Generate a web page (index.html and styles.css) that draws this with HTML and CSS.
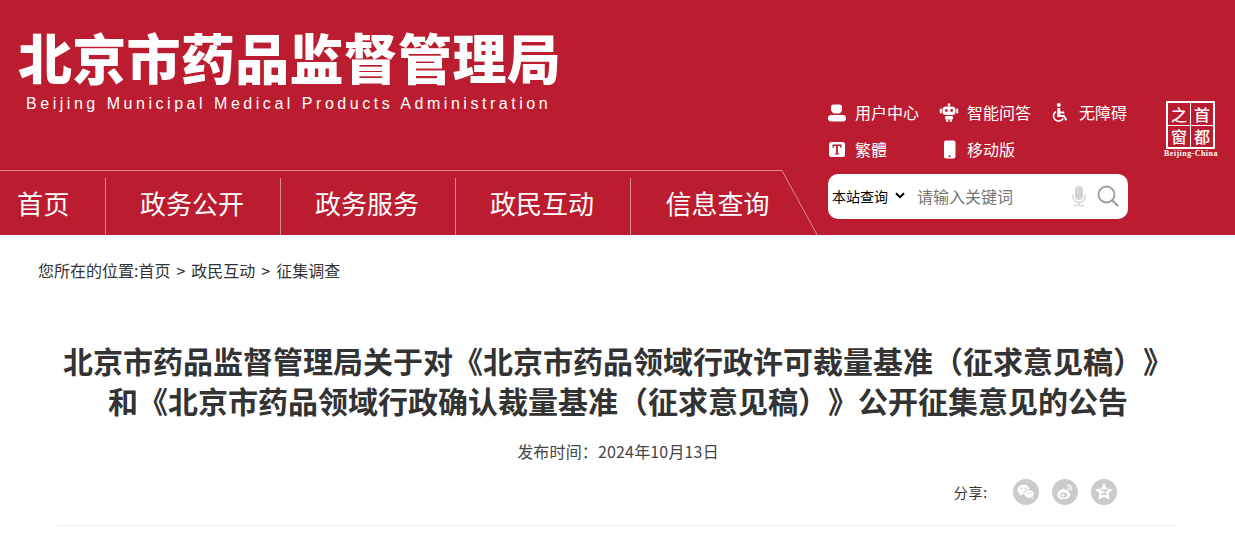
FILE: index.html
```html
<!DOCTYPE html>
<html lang="zh-CN">
<head>
<meta charset="utf-8">
<title>北京市药品监督管理局</title>
<link rel="stylesheet" href="styles.css">
</head>
<body>
<header class="header">
  <div class="brand-col">
    <div class="brand">
      <div class="brand-cn">北京市药品监督管理局</div>
      <div class="brand-en">Beijing Municipal Medical Products Administration</div>
    </div>
    <nav class="nav">
      <a class="nav-item nav-first">首页</a>
      <a class="nav-item">政务公开</a>
      <a class="nav-item">政务服务</a>
      <a class="nav-item">政民互动</a>
      <a class="nav-item nav-last">信息查询</a>
    </nav>
    <svg class="nav-slant" width="40" height="66" viewBox="0 0 40 66"><path d="M0 .5H3L38.500 65.500" fill="none" stroke="#d98b95" stroke-width="1"/></svg>
  </div>
  <div class="tools-col">
    <div class="tools">
      <a class="tool">
        <svg class="ico" width="20" height="20" viewBox="0 0 20 20"><path d="M6.500 2.500h6c1.500 0 2.500 1 2.500 2.500v2.500c0 2.200-1.500 4-3.500 4H8c-2 0-4-1.800-4-4V5c0-1.500 1-2.500 2.500-2.500z" fill="#fff"/><rect x="1" y="13" width="18" height="6.500" rx="3.200" fill="#fff"/></svg>
        <span>用户中心</span>
      </a>
      <a class="tool">
        <svg class="ico" width="20" height="20" viewBox="0 0 20 20"><circle cx="10" cy="2.500" r="1.200" fill="#fff"/><rect x="9.400" y="2.500" width="1.200" height="2" fill="#fff"/><rect x="3.500" y="4.500" width="13" height="8.500" rx="3.500" fill="#fff"/><rect x=".8" y="6.500" width="2" height="5" rx="1" fill="#fff"/><rect x="17.200" y="6.500" width="2" height="5" rx="1" fill="#fff"/><circle cx="7.300" cy="8.500" r="1.400" fill="#bc1c2f"/><circle cx="12.700" cy="8.500" r="1.400" fill="#bc1c2f"/><rect x="6" y="14" width="8" height="3.500" rx="1" fill="#fff"/><rect x="7" y="17.500" width="2.300" height="2.200" fill="#fff"/><rect x="10.700" y="17.500" width="2.300" height="2.200" fill="#fff"/></svg>
        <span>智能问答</span>
      </a>
      <a class="tool">
        <svg class="ico" width="20" height="20" viewBox="0 0 20 20"><circle cx="7.800" cy="3" r="2" fill="#fff"/><path d="M6.300 6h3v3.500h4v2h-4v1.500h4.200l2.700 4.700-1.800 1-2.100-3.700H6.300z" fill="#fff"/><path d="M4.900 9.500a5.200 5.200 0 1 0 7.300 7" fill="none" stroke="#fff" stroke-width="1.500"/></svg>
        <span>无障碍</span>
      </a>
      <a class="tool">
        <svg class="ico" width="20" height="20" viewBox="0 0 20 20"><rect x="2" y="3" width="16" height="15" rx="2.500" fill="#fff"/><path d="M5.500 5.500h9v3.200h-1l-.7-1.700h-1.900v7.200l1.300.6v.7H7.800v-.7l1.300-.6V7H7.200l-.7 1.700h-1z" fill="#bc1c2f"/></svg>
        <span>繁體</span>
      </a>
      <a class="tool">
        <svg class="ico" width="20" height="20" viewBox="0 0 20 20"><rect x="5" y="1.500" width="11.500" height="18" rx="2" fill="#fff"/><circle cx="10.700" cy="17.200" r="1" fill="#bc1c2f"/></svg>
        <span>移动版</span>
      </a>
    </div>
    <form class="search">
      <span class="search-scope">本站查询
        <svg class="chev" width="10" height="7" viewBox="0 0 10 7"><path d="M1 1.300 5 5.200 9 1.300" fill="none" stroke="#000" stroke-width="2"/></svg>
      </span>
      <span class="search-input">请输入关键词</span>
      <svg class="mic" width="14" height="22" viewBox="0 0 14 22"><rect x="3" y="1" width="8" height="14" rx="4" fill="#d4d4d4"/><path d="M1 9.500v2a6 6 0 0 0 12 0v-2" fill="none" stroke="#d4d4d4" stroke-width="1.400"/><path d="M7 17.500V20M2.500 20.500h9" stroke="#d4d4d4" stroke-width="1.400"/></svg>
      <svg class="mag" width="22" height="22" viewBox="0 0 22 22"><circle cx="9.500" cy="9.500" r="8" fill="none" stroke="#9a9a9a" stroke-width="1.800"/><path d="M15.500 15.500 21 21" stroke="#9a9a9a" stroke-width="2"/></svg>
    </form>
  </div>
  <div class="emblem">
    <div class="emblem-box">
      <span class="emblem-ch">之</span><span class="emblem-ch">首</span>
      <span class="emblem-ch">窗</span><span class="emblem-ch">都</span>
    </div>
    <div class="emblem-en">Beijing-China</div>
  </div>
</header>

<main class="main">
  <div class="crumbs"><span>您所在的位置:首页</span><span class="crumb-sep">&gt;</span><span>政民互动</span><span class="crumb-sep">&gt;</span><span>征集调查</span></div>
  <article class="article">
    <h1 class="title">北京市药品监督管理局关于对《北京市药品领域行政许可裁量基准（征求意见稿）》<br>和《北京市药品领域行政确认裁量基准（征求意见稿）》公开征集意见的公告</h1>
    <div class="date">发布时间：2024年10月13日</div>
    <div class="share">
      <span class="share-label">分享:</span>
      <a class="share-btn">
        <svg width="26" height="26" viewBox="0 0 26 26"><circle cx="13" cy="13" r="13" fill="#cbcbcb"/><ellipse cx="10.500" cy="10.800" rx="6" ry="5" fill="#fff"/><path d="M7 14.500l-.8 2.500 3-1.500z" fill="#fff"/><ellipse cx="16" cy="15" rx="5.300" ry="4.300" fill="#fff" stroke="#cbcbcb" stroke-width="1"/><path d="M18.500 18.500l1.300 1.800-.2-2.600z" fill="#fff"/><circle cx="8.500" cy="9.500" r=".9" fill="#cbcbcb"/><circle cx="12.500" cy="9.500" r=".9" fill="#cbcbcb"/><circle cx="14.300" cy="14" r=".7" fill="#cbcbcb"/><circle cx="17.700" cy="14" r=".7" fill="#cbcbcb"/></svg>
      </a>
      <a class="share-btn">
        <svg width="26" height="26" viewBox="0 0 26 26"><circle cx="13" cy="13" r="13" fill="#cbcbcb"/><path d="M11.500 9.500c-3.200 1-6.300 4.200-6 7.200.3 2.500 3.300 3.800 6.500 3.500 3.500-.3 6.500-2.300 6.500-4.700 0-1.800-1.800-2.300-2.500-2.500.5-1.200.4-2.300-1-2.500-1 0-2.500.6-2.500.6 0-1.300-.2-1.900-1-1.600z" fill="#fff"/><ellipse cx="11.500" cy="16" rx="3.500" ry="2.800" fill="#cbcbcb"/><circle cx="11" cy="16.200" r="1.500" fill="#fff"/><path d="M15 6.500c3-.5 5.500 2 4.700 5M15.500 9c1.500-.2 2.500 1 2.100 2.300" fill="none" stroke="#fff" stroke-width="1.200"/></svg>
      </a>
      <a class="share-btn">
        <svg width="26" height="26" viewBox="0 0 26 26"><circle cx="13" cy="13" r="13" fill="#cbcbcb"/><path d="M13 4l2.800 5.500 6.200.8-4.500 4.200 1.100 6.200L13 18 7.400 20.700l1.100-6.200L4 10.300l6.200-.8z" fill="#fff"/><path d="M10 11h6l-4.500 4.300H16" fill="none" stroke="#cbcbcb" stroke-width="1.500"/></svg>
      </a>
    </div>
  </article>
</main>
</body>
</html>
```
FILE: styles.css
```css
* { box-sizing: border-box; }
html, body { margin: 0; padding: 0; }
body {
  width: 1235px;
  height: 537px;
  overflow: hidden;
  background: #fff;
  color: #333;
  font-family: "Noto Sans CJK SC", "Liberation Sans", sans-serif;
  text-spacing-trim: space-all;
}
.header {
  display: flex;
  height: 235px;
  background: #bc1c2f;
  color: #fff;
}
.brand-col {
  position: relative;
  width: 828px;
  flex: none;
}
.brand {
  height: 170px;
  padding: 23px 0 0 18px;
}
.brand-cn {
  font-size: 54px;
  font-weight: 900;
  line-height: 68px;
  letter-spacing: .3px;
  white-space: nowrap;
}
.brand-en {
  font-family: "Liberation Sans", sans-serif;
  font-size: 16px;
  line-height: 20px;
  letter-spacing: 3.53px;
  padding-left: 8px;
  margin-top: 3px;
  white-space: nowrap;
}
.nav {
  display: flex;
  width: 781px;
  height: 65px;
  padding-top: 7px;
  border-top: 1px solid #d98b95;
}
.nav-item {
  display: block;
  flex: none;
  width: 175px;
  height: 57px;
  padding-right: 2px;
  line-height: 50px;
  font-size: 26px;
  text-align: center;
  border-right: 1px solid #d98b95;
  white-space: nowrap;
}
.nav-first { width: 106px; text-align: left; padding: 0 0 0 17px; letter-spacing: .5px; }
.nav-last { border-right: 0; }
.nav-slant {
  position: absolute;
  left: 779px;
  top: 170px;
}
.tools-col {
  width: 338px;
  flex: none;
  padding-top: 93px;
}
.tools {
  display: flex;
  flex-wrap: wrap;
  align-content: flex-start;
  width: 336px;
  height: 81px;
}
.tool {
  display: flex;
  align-items: center;
  width: 112px;
  height: 37px;
  font-size: 16px;
}
.ico { flex: none; margin-right: 8px; margin-left: -1px; }
.search {
  display: flex;
  align-items: center;
  width: 300px;
  height: 45px;
  padding-bottom: 2px;
  background: #fff;
  border-radius: 10px;
}
.search-scope {
  display: flex;
  align-items: center;
  width: 89px;
  flex: none;
  padding-left: 4px;
  font-size: 14px;
  color: #000;
  white-space: nowrap;
}
.chev { margin-left: 7px; }
.search-input {
  width: 156px;
  flex: none;
  font-size: 16px;
  color: #757575;
}
.mic { flex: none; margin-left: -1px; }
.mag { flex: none; margin-left: 11px; }
.emblem {
  width: 69px;
  flex: none;
  padding-top: 101px;
}
.emblem-box {
  display: grid;
  grid-template-columns: 1fr 1fr;
  grid-template-rows: 1fr 1fr;
  width: 49px;
  height: 48px;
  border: 2px solid #fff;
  background: #fff;
  gap: 1px;
  border-radius: 1px;
}
.emblem-ch {
  display: flex;
  align-items: center;
  justify-content: center;
  font-size: 16px;
  font-weight: 500;
  line-height: 1;
  background: #bc1c2f;
  overflow: hidden;
}
.emblem-en {
  font-family: "Liberation Serif", serif;
  font-size: 8px;
  font-weight: 700;
  line-height: 9px;
  margin-top: 0;
  margin-left: -2px;
  letter-spacing: .45px;
  white-space: nowrap;
}
.main { height: 302px; }
.crumbs {
  padding: 24px 0 0 38px;
  font-size: 16px;
  line-height: 22px;
  color: #333;
}
.crumb-sep { margin: 0 6px; }
.article {
  width: 1120px;
  height: 245px;
  margin: 0 0 0 58px;
  border-bottom: 1px solid #eee;
  padding-top: 59px;
}
.title {
  margin: 0;
  font-size: 30px;
  font-weight: 700;
  line-height: 40px;
  text-align: center;
  color: #333;
}
.date {
  margin-top: 19px;
  height: 24px;
  line-height: 24px;
  font-size: 16px;
  letter-spacing: .16px;
  text-align: center;
  color: #444;
}
.share {
  display: flex;
  align-items: center;
  justify-content: flex-end;
  margin-top: 16px;
  padding-right: 61px;
  gap: 13px;
}
.share-label {
  font-size: 14px;
  letter-spacing: .8px;
  margin-right: 12px;
  color: #333;
}
.share-btn { display: block; width: 26px; height: 26px; }
.share-btn svg { display: block; }
```
